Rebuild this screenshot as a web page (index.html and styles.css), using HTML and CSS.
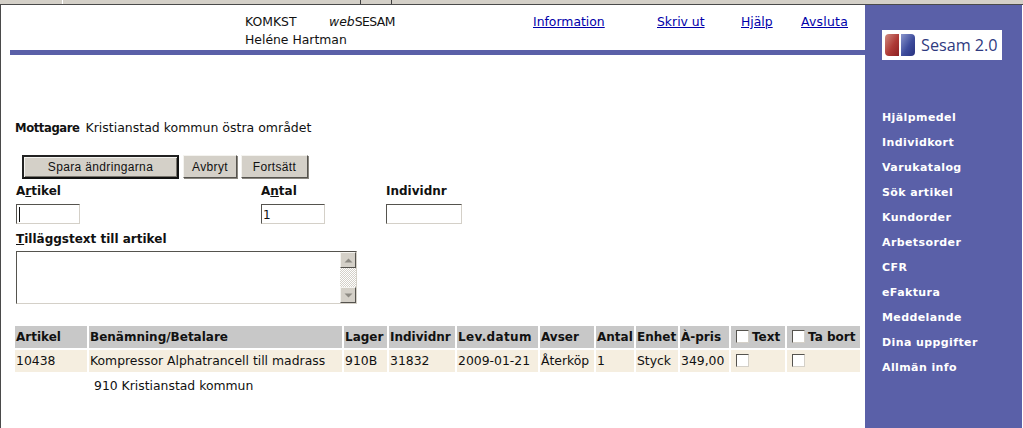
FILE: index.html
```html
<!DOCTYPE html>
<html lang="sv">
<head>
<meta charset="utf-8">
<title>webSESAM</title>
<link rel="stylesheet" href="styles.css">
</head>
<body>
<div class="chrome"><span class="tab tab-a"></span><span class="tab tab-b"></span><span class="tab tab-c"></span></div>
<div class="page">
  <main class="main">
    <header class="top">
      <div class="who">
        <div class="who-line"><span class="org">KOMKST</span><span><i>web</i><span class="brand">SESAM</span></span></div>
        <div class="who-line">Heléne Hartman</div>
      </div>
      <nav class="toplinks">
        <a class="l-info" href="#">Information</a>
        <a class="l-print" href="#">Skriv ut</a>
        <a class="l-help" href="#">Hjälp</a>
        <a class="l-quit" href="#">Avsluta</a>
      </nav>
    </header>
    <div class="rule"></div>
    <p class="recipient"><b>Mottagare</b> Kristianstad kommun östra området</p>
    <div class="buttons">
      <button class="btn btn-default" type="button">Spara ändringarna</button>
      <button class="btn btn-a" type="button">Avbryt</button>
      <button class="btn btn-f" type="button">Fortsätt</button>
    </div>
    <div class="fields">
      <label class="field f-art"><span class="lab">A<u>r</u>tikel</span><span class="input caret"></span></label>
      <label class="field f-ant"><span class="lab">A<u>n</u>tal</span><span class="input">1</span></label>
      <label class="field f-ind"><span class="lab">Individnr</span><span class="input"></span></label>
    </div>
    <div class="lab lab-text"><u>T</u>illäggstext till artikel</div>
    <div class="textarea">
      <div class="scroll">
        <span class="sb sb-up"><svg width="9" height="5" viewBox="0 0 9 5"><path d="M4.5 0.5 L8.5 4.5 H0.5 Z" fill="#8e8b84"/></svg></span>
        <span class="track"></span>
        <span class="sb sb-down"><svg width="9" height="5" viewBox="0 0 9 5"><path d="M0.5 0.5 H8.5 L4.5 4.5 Z" fill="#8e8b84"/></svg></span>
      </div>
    </div>
    <table class="grid">
      <thead>
        <tr>
          <th class="c1">Artikel</th><th class="c2">Benämning/Betalare</th><th class="c3">Lager</th><th class="c4">Individnr</th><th class="c5">Lev.datum</th><th class="c6">Avser</th><th class="c7">Antal</th><th class="c8">Enhet</th><th class="c9">À-pris</th>
          <th class="c10"><span class="chk"></span>Text</th><th class="c11"><span class="chk"></span>Ta bort</th>
        </tr>
      </thead>
      <tbody>
        <tr class="row">
          <td>10438</td><td>Kompressor Alphatrancell till madrass</td><td>910B</td><td>31832</td><td>2009-01-21</td><td>Återköp</td><td>1</td><td>Styck</td><td>349,00</td>
          <td><span class="chk"></span></td><td><span class="chk"></span></td>
        </tr>
      </tbody>
    </table>
    <div class="payer">910 Kristianstad kommun</div>
  </main>
  <aside class="side">
    <div class="logo">
      <svg width="30" height="22" viewBox="0 0 30 22">
        <defs>
          <linearGradient id="red" x1="0" y1="0" x2="1" y2="1"><stop offset="0" stop-color="#d08a80"/><stop offset="0.55" stop-color="#ae3a36"/><stop offset="1" stop-color="#8c2022"/></linearGradient>
          <linearGradient id="blue" x1="0" y1="0" x2="1" y2="1"><stop offset="0" stop-color="#8a96cc"/><stop offset="0.55" stop-color="#3e4c9c"/><stop offset="1" stop-color="#28317e"/></linearGradient>
        </defs>
        <path d="M4 0 H14 V22 H4 Q0 22 0 18 V4 Q0 0 4 0 Z" fill="url(#red)"/>
        <path d="M16 0 H26 Q30 0 30 4 V18 Q30 22 26 22 H16 Z" fill="url(#blue)"/>
      </svg>
      <span class="logo-text">Sesam 2.0</span>
    </div>
    <nav class="menu">
      <a href="#">Hjälpmedel</a>
      <a href="#">Individkort</a>
      <a href="#">Varukatalog</a>
      <a href="#">Sök artikel</a>
      <a href="#">Kundorder</a>
      <a href="#">Arbetsorder</a>
      <a href="#">CFR</a>
      <a href="#">eFaktura</a>
      <a href="#">Meddelande</a>
      <a href="#">Dina uppgifter</a>
      <a href="#">Allmän info</a>
    </nav>
  </aside>
</div>
</body>
</html>
```
FILE: styles.css
```css
* { box-sizing: border-box; }
html, body { margin: 0; padding: 0; height: 100%; overflow: hidden; background: #fff; }
body { font: 12px/16px "DejaVu Sans", Verdana, sans-serif; color: #111; display: flex; flex-direction: column; }

.chrome { height: 5px; flex: none; background: #d4d0c8; border-bottom: 1px solid #4a4a4a; display: flex; }
.tab { height: 4px; border-right: 1px solid #8a8780; }
.tab-a { width: 63px; border-right-color: #fff; }
.tab-b { width: 298px; border-right-color: #404040; }
.tab-c { width: 31px; border-right-color: #404040; }

.page { flex: 1; display: flex; min-height: 0; border-left: 1px solid #4a4a4a; }
.main { width: 864px; flex: none; }
.side { width: 157px; flex: none; background: #5a60a8; padding: 25px 0 0 17px; }

.top { height: 45px; display: flex; padding: 8px 0 0 244px; line-height: 18px; font-size: 12.4px; }
.who { width: 288px; flex: none; }
.who-line { display: flex; }
.org { width: 84px; }
.brand { letter-spacing: -0.55px; }
.toplinks { display: flex; }
.toplinks a { color: #0000aa; }
.l-info { width: 124px; }
.l-print { width: 84px; }
.l-help { width: 60px; }
.l-quit { letter-spacing: 0.25px; }

.rule { height: 5px; margin-left: 9px; background: #5a60a8; }

.recipient { margin: 65px 0 0 14px; height: 16px; font-size: 12.5px; line-height: 16px; }
.recipient b { font-size: 11.6px; letter-spacing: -0.4px; margin-right: 2px; }

.buttons { display: flex; gap: 4px; margin: 19px 0 0 21px; height: 24px; }
.btn { height: 24px; padding: 0; background: #d4d0c8; font: 12px/1 "Liberation Sans", Arial, sans-serif; letter-spacing: 0.35px; color: #111; border: 1px solid; border-color: #f4f3ef #55534e #55534e #f4f3ef; box-shadow: 1px 1px 0 #8a8780; }
.btn-default { width: 157px; border: 2px solid #111; border-color: #222 #111 #111 #222; box-shadow: inset 1px 1px 0 #f4f3ef, inset -1px -1px 0 #77746d; }
.btn-a { width: 54px; height: 23px; }
.btn-f { width: 67px; height: 23px; }

.fields { display: flex; margin: 4px 0 0 15px; }
.field { display: flex; flex-direction: column; flex: none; }
.f-art { width: 245px; }
.f-ant { width: 125px; }
.lab { font-weight: 700; font-size: 12px; line-height: 16px; display: block; }
.field .lab { height: 21px; }
.input { display: block; height: 20px; background: #fff; border: 1px solid; border-color: #55534e #d4d0c8 #d4d0c8 #55534e; padding: 2px 0 0 1px; font-size: 12px; line-height: 16px; }
.f-art .input, .f-ant .input { width: 64px; }
.f-ind .input { width: 76px; }
.caret::before { content: ""; display: block; width: 1px; height: 15px; background: #111; margin-left: 1px; }

.lab-text { margin: 7px 0 0 15px; }
.textarea { margin: 4px 0 0 15px; width: 341px; height: 53px; border: 1px solid; border-color: #55534e #d4d0c8 #d4d0c8 #55534e; display: flex; justify-content: flex-end; }
.scroll { width: 16px; display: flex; flex-direction: column; }
.sb { height: 16px; flex: none; background: #d4d0c8; border: 1px solid; border-color: #f4f3ef #55534e #55534e #f4f3ef; display: flex; align-items: center; justify-content: center; }
.track { flex: 1; background: repeating-conic-gradient(#d4d0c8 0 25%, #fff 0 50%) 0 0 / 2px 2px; }

.grid { margin: 20px 0 0 12px; border-collapse: separate; border-spacing: 2px; table-layout: fixed; width: 849px; font-size: 12px; }
.grid th, .grid td { padding: 0 0 0 1px; height: 22px; text-align: left; white-space: nowrap; overflow: hidden; }
.grid th { background: #c8c8c8; font-weight: 700; }
.grid td { font-size: 12.4px; }
.row td { background: #f5eee0; }
.c1 { width: 72px; } .c2 { width: 253px; } .c3 { width: 43px; } .c4 { width: 66px; } .c5 { width: 81px; letter-spacing: 0.35px; } .c6 { width: 54px; } .c7 { width: 38px; } .c8 { width: 42px; } .c9 { width: 49px; } .c10 { width: 54px; } .c11 { width: 73px; }
.chk { display: inline-block; width: 13px; height: 13px; margin: 0 3px 0 4px; vertical-align: -2px; background: #fff; border: 1px solid; border-color: #55534e #d4d0c8 #d4d0c8 #55534e; }

.payer { margin: 1px 0 0 93px; line-height: 22px; font-size: 12.4px; }

.logo { width: 120px; height: 30px; background: #fff; display: flex; align-items: center; padding-left: 3px; gap: 6px; }
.logo svg { flex: none; }
.logo-text { font: 16.2px/1 "Open Sans", "Liberation Sans", sans-serif; color: #2f3a80; }

.menu { margin-top: 45px; display: flex; flex-direction: column; }
.menu a { height: 25px; line-height: 25px; color: #fff; font-weight: 700; font-size: 11px; letter-spacing: 0.4px; text-decoration: none; }
```
